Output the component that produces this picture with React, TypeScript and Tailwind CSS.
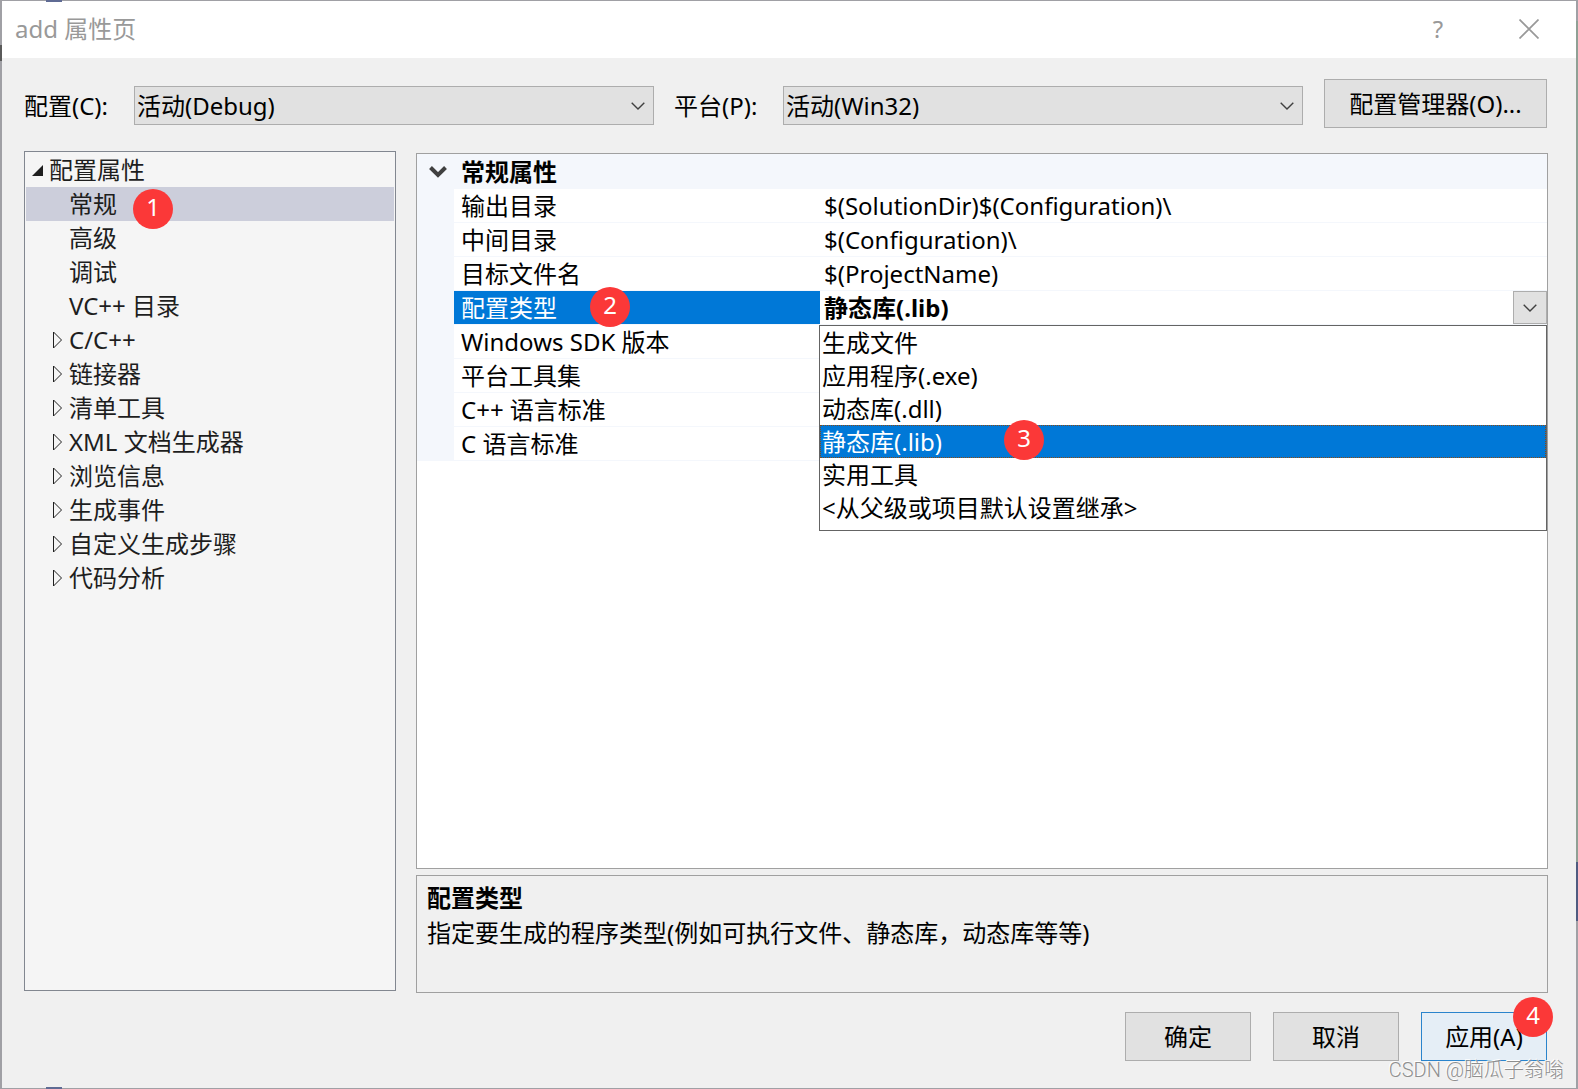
import { useState } from "react"
import type { ReactNode } from "react"

const treeItems = [
  { label: "常规", expandable: false, badge: 1 },
  { label: "高级", expandable: false },
  { label: "调试", expandable: false },
  { label: "VC++ 目录", expandable: false },
  { label: "C/C++", expandable: true },
  { label: "链接器", expandable: true },
  { label: "清单工具", expandable: true },
  { label: "XML 文档生成器", expandable: true },
  { label: "浏览信息", expandable: true },
  { label: "生成事件", expandable: true },
  { label: "自定义生成步骤", expandable: true },
  { label: "代码分析", expandable: true }
]

const properties = [
  { label: "输出目录", value: "$(SolutionDir)$(Configuration)\\" },
  { label: "中间目录", value: "$(Configuration)\\" },
  { label: "目标文件名", value: "$(ProjectName)" },
  { label: "配置类型", value: "", editing: true },
  { label: "Windows SDK 版本", value: "" },
  { label: "平台工具集", value: "" },
  { label: "C++ 语言标准", value: "" },
  { label: "C 语言标准", value: "" }
]

const configTypes = [
  "生成文件",
  "应用程序(.exe)",
  "动态库(.dll)",
  "静态库(.lib)",
  "实用工具",
  "<从父级或项目默认设置继承>"
]

const ChevronIcon = () => (
  <svg width="14" height="8" viewBox="0 0 14 8" fill="none" stroke="#404040" strokeWidth="1.4">
    <path d="M0.7 0.7 L7 7 L13.3 0.7" />
  </svg>
)

const Badge = ({ className, children }: { className: string; children: ReactNode }) => (
  <span
    className={`absolute z-20 w-10 h-10 rounded-full bg-[#fb3838] text-white text-2xl leading-9 font-normal text-center ${className}`}
  >
    {children}
  </span>
)

const ComboBox = ({ id, value }: { id: string; value: string }) => (
  <div className="relative flex-1">
    <select
      id={id}
      defaultValue={value}
      className="block w-full h-[39px] appearance-none rounded-none border border-[#adadad] bg-[#e1e1e1] pl-0.5 pr-9 outline-none"
    >
      <option>{value}</option>
    </select>
    <span className="absolute right-[9px] inset-y-0 flex items-center pointer-events-none">
      <ChevronIcon />
    </span>
  </div>
)

const TitleBar = () => (
  <header className="flex items-center justify-between h-[57px] bg-white pl-[13px] pr-[37px] pb-0.5 text-[#999999]">
    <h1>add 属性页</h1>
    <div className="flex items-center gap-[75px]">
      <button type="button" aria-label="帮助" className="w-3">
        ?
      </button>
      <button type="button" aria-label="关闭">
        <svg width="20" height="20" viewBox="0 0 20 20" fill="none" stroke="#999999" strokeWidth="1.7">
          <path d="M0.5 0.5 L19.5 19.5 M19.5 0.5 L0.5 19.5" />
        </svg>
      </button>
    </div>
  </header>
)

const Toolbar = () => (
  <div className="flex items-end gap-[21px] pr-px">
    <div className="flex flex-1 items-center pb-[3px]">
      <label htmlFor="config" className="w-[110px]">
        配置(C):
      </label>
      <ComboBox id="config" value="活动(Debug)" />
      <label htmlFor="platform" className="w-[129px] pl-5">
        平台(P):
      </label>
      <ComboBox id="platform" value="活动(Win32)" />
    </div>
    <button type="button" className="w-[223px] h-[49px] border border-[#adadad] bg-[#e1e1e1]">
      配置管理器(O)...
    </button>
  </div>
)

const Tree = () => {
  const [selected, setSelected] = useState("常规")

  return (
    <nav className="w-[372px] shrink-0 mb-0.5 border border-[#828790] bg-[#f5f5f5] p-px text-[#1e1e1e] leading-[34px]">
      <div className="flex items-center h-[34px] pl-1.5">
        <svg width="11" height="11" viewBox="0 0 11 11" fill="#1e1e1e">
          <path d="M11 0 V11 H0 Z" />
        </svg>
        <span className="pl-1.5">配置属性</span>
      </div>
      <ul>
        {treeItems.map((item) => (
          <li key={item.label} className="relative">
            <button
              type="button"
              onClick={() => setSelected(item.label)}
              className={`flex items-center w-full h-[34px] pl-[27px] text-left ${
                selected === item.label ? "bg-[#cccedb]" : ""
              }`}
            >
              <span className="w-4 shrink-0">
                {item.expandable && (
                  <svg width="10" height="18" viewBox="0 0 10 18" fill="none" stroke="#1e1e1e">
                    <path d="M0.5 1 V17 L8.5 9 Z" />
                  </svg>
                )}
              </span>
              {item.label}
            </button>
            {item.badge && <Badge className="left-[107px] top-0.5">{item.badge}</Badge>}
          </li>
        ))}
      </ul>
    </nav>
  )
}

const ConfigTypeEditor = () => {
  const [value, setValue] = useState("静态库(.lib)")
  const [open, setOpen] = useState(true)

  return (
    <div className="relative">
      <div className="flex h-[33px]">
        <select
          aria-label="配置类型"
          value={value}
          onChange={(e) => setValue(e.target.value)}
          className="flex-1 appearance-none bg-white pl-1 font-bold outline-none"
        >
          {configTypes.map((type) => (
            <option key={type}>{type}</option>
          ))}
        </select>
        <button
          type="button"
          aria-label="展开"
          onClick={() => setOpen(!open)}
          className="flex items-center justify-center w-[34px] border border-[#adadad] bg-[#e1e1e1]"
        >
          <ChevronIcon />
        </button>
      </div>
      {open && (
        <ul
          role="listbox"
          className="absolute z-10 -left-px right-0 top-[34px] border border-[#646464] bg-white pb-1.5 leading-[33px]"
        >
          {configTypes.map((type) => (
            <li
              key={type}
              role="option"
              aria-selected={type === value}
              onClick={() => setValue(type)}
              className={`relative h-[33px] pl-0.5 ${
                type === value
                  ? "bg-[#0078d7] text-white outline-1 -outline-offset-1 outline-dotted outline-[#8a4a14]"
                  : ""
              }`}
            >
              {type}
              {type === "静态库(.lib)" && <Badge className="left-[184px] -top-[5px]">3</Badge>}
            </li>
          ))}
        </ul>
      )}
    </div>
  )
}

const PropertyGrid = () => (
  <section className="flex-1 border border-[#a0a0a0] bg-white">
    <table className="w-full table-fixed border-separate border-spacing-0 text-left">
      <colgroup>
        <col className="w-[37px]" />
        <col className="w-[366px]" />
        <col />
      </colgroup>
      <thead>
        <tr className="h-[35px] bg-[#f4f7fc]">
          <th className="p-0">
            <svg className="ml-3" width="18" height="12" viewBox="0 0 18 12" fill="none" stroke="#404040" strokeWidth="4">
              <path d="M1.5 1.5 L9 9 L16.5 1.5" />
            </svg>
          </th>
          <th colSpan={2} className="p-0 pl-[7px] font-bold leading-[35px]">
            常规属性
          </th>
        </tr>
      </thead>
      <tbody>
        {properties.map((prop) => (
          <tr key={prop.label} className="h-[34px] leading-[33px]">
            <td className="p-0 bg-[#f4f7fc]"></td>
            <th
              scope="row"
              className={`relative p-0 pl-[7px] border-b border-[#f4f7fc] bg-clip-padding font-normal ${
                prop.editing ? "bg-[#0078d7] text-white" : ""
              }`}
            >
              {prop.label}
              {prop.editing && <Badge className="left-[136px] -top-1">2</Badge>}
            </th>
            {prop.editing ? (
              <td className="p-0 border-b border-[#f4f7fc]">
                <ConfigTypeEditor />
              </td>
            ) : (
              <td className="p-0 pl-1 border-b border-[#f4f7fc]">{prop.value}</td>
            )}
          </tr>
        ))}
      </tbody>
    </table>
  </section>
)

const Description = () => (
  <section className="mt-1.5 h-[118px] border border-[#a0a0a0] px-2.5 pt-1 leading-[35px]">
    <h2 className="font-bold">配置类型</h2>
    <p>指定要生成的程序类型(例如可执行文件、静态库，动态库等等)</p>
  </section>
)

const Footer = () => (
  <footer className="flex justify-end gap-[22px] mt-[19px] pr-px">
    <button type="button" className="w-[126px] h-[49px] border border-[#adadad] bg-[#e1e1e1]">
      确定
    </button>
    <button type="button" className="w-[126px] h-[49px] border border-[#adadad] bg-[#e1e1e1]">
      取消
    </button>
    <div className="relative">
      <button type="button" className="w-[126px] h-[49px] border border-[#2a84cc] bg-[#e5eef6]">
        应用(A)
      </button>
      <Badge className="-right-1.5 -top-[15px]">4</Badge>
    </div>
  </footer>
)

export default function App() {
  return (
    <div className="relative flex flex-col min-h-screen border-x-2 border-y border-[#a0a0a5] bg-[#f0f0f0] font-['Noto_Sans','Noto_Sans_CJK_SC',sans-serif] text-2xl text-black">
      <TitleBar />
      <main className="flex flex-col flex-1 pl-[22px] pr-7 pt-[21px] pb-[27px]">
        <Toolbar />
        <div className="flex flex-1 gap-5 mt-[23px]">
          <Tree />
          <div className="flex flex-col flex-1 pt-0.5">
            <PropertyGrid />
            <Description />
          </div>
        </div>
        <Footer />
      </main>
      {/* bits of the window behind showing along the frame */}
      <span className="absolute -top-px left-11 w-4 h-0.5 bg-[#5f6b94]" />
      <span className="absolute -left-0.5 top-11 w-0.5 h-4 bg-[#5a5a5a]" />
      <span className="absolute -bottom-px left-11 w-4 h-0.5 bg-[#5f6b94]" />
      <span className="absolute -right-0.5 top-5 w-0.5 h-[841px] bg-[#8fa095]" />
      <span className="absolute -right-0.5 bottom-[167px] w-0.5 h-[59px] bg-[#4f5b80]" />
      <p className="absolute right-3 bottom-1.5 font-['Roboto','Noto_Sans_CJK_SC',sans-serif] font-light text-xl leading-6 text-[#8f8f8f] [text-shadow:-1px_-1px_0_#fff] pointer-events-none">
        CSDN @脑瓜子翁嗡
      </p>
    </div>
  )
}
